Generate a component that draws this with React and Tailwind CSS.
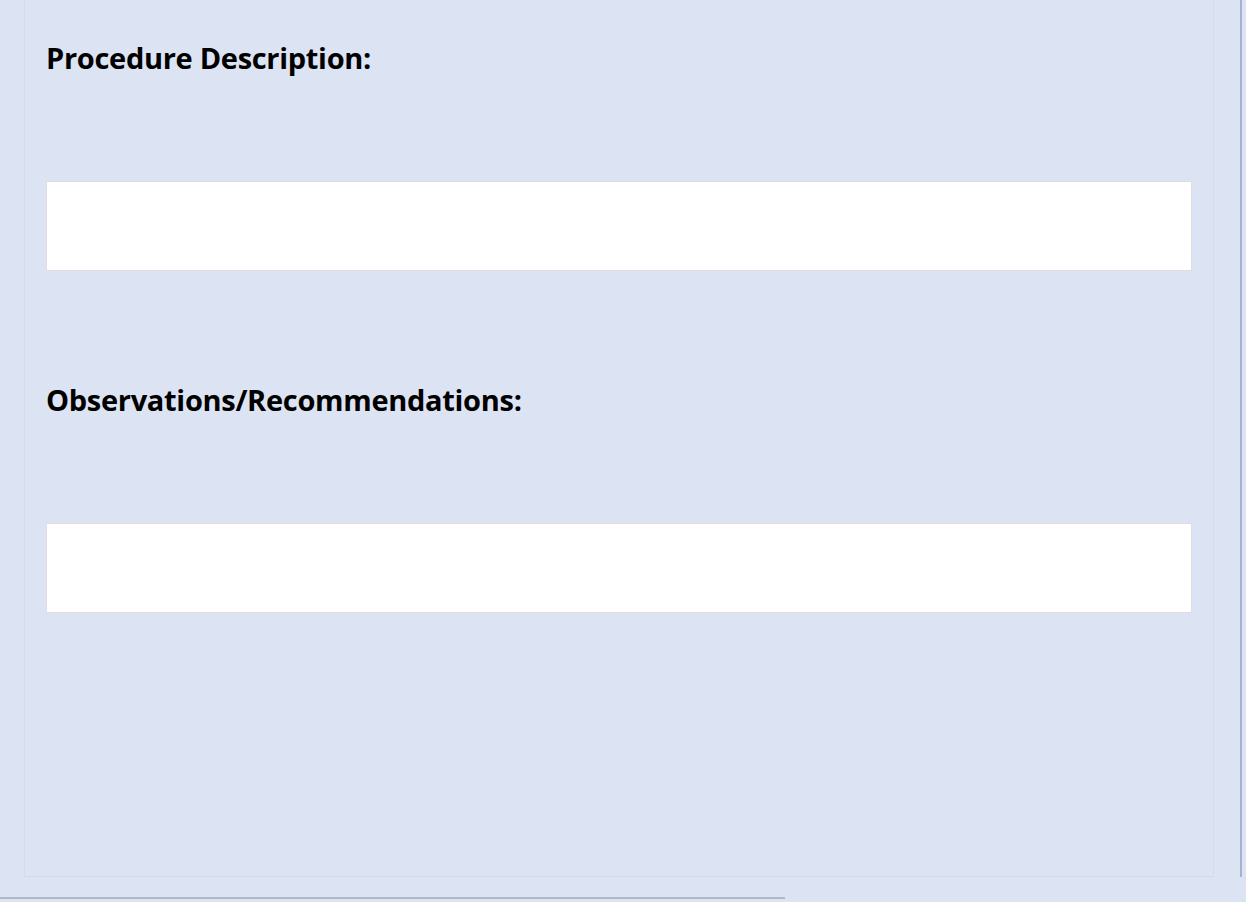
export default function App() {
  return (
    <div className="h-[902px] w-full overflow-hidden bg-[#dce3f2] font-['Open_Sans',sans-serif] text-black">
      <div className="flex h-[877px]">
        <div className="ml-[24px] w-[1190px] border-x border-b border-[#d7dbe3] px-[21px] pt-[41px]">
          <h2 className="text-[29px] font-bold leading-[34px] tracking-[-0.3px]">Procedure Description:</h2>
          <input type="text" className="mt-[106px] block h-[90px] w-[1146px] border border-[#dedede] bg-white outline-none" />
          <h2 className="mt-[112px] text-[29px] font-bold leading-[34px] tracking-[-0.3px]">Observations/Recommendations:</h2>
          <input type="text" className="mt-[106px] block h-[90px] w-[1146px] border border-[#dedede] bg-white outline-none" />
        </div>
        <div className="ml-[26px] w-[2px] bg-[#a6b1cb]" />
      </div>
      <div className="mt-[20px] h-[2px] w-[785px] bg-[#b1b9c9]" />
    </div>
  );
}
